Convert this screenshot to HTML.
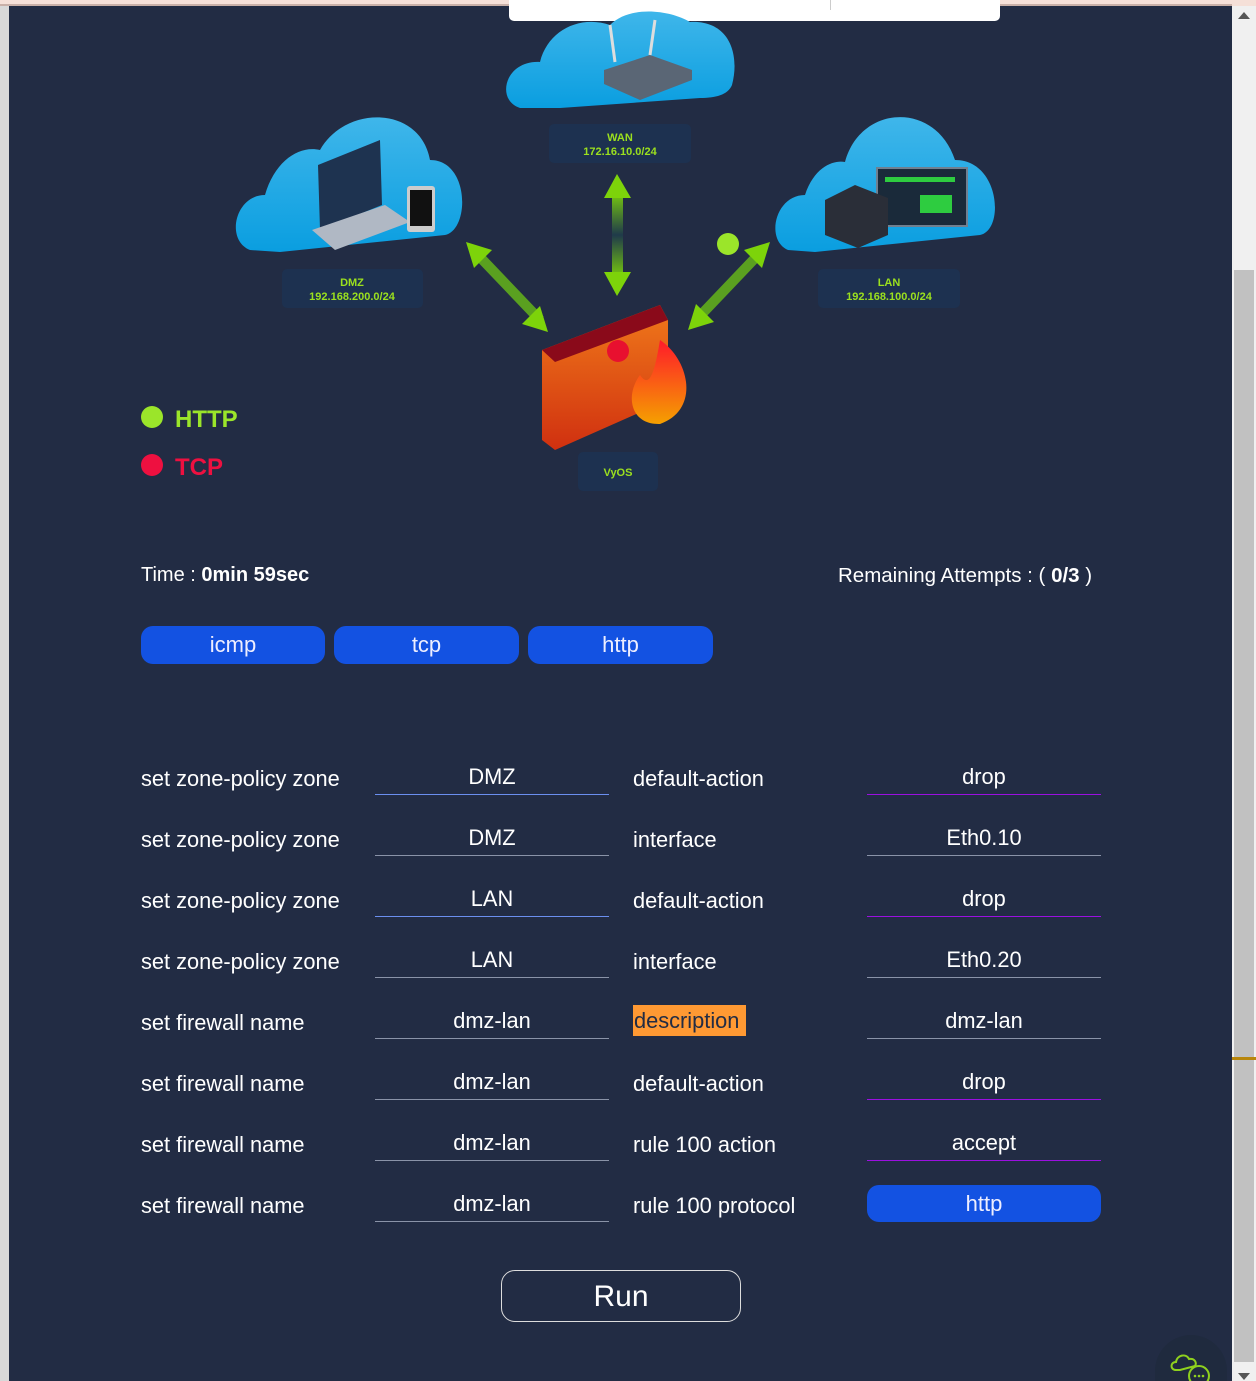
<!DOCTYPE html>
<html style="overflow:hidden;width:1256px;height:1381px"><head><meta charset="utf-8"><style>
*{margin:0;padding:0;box-sizing:border-box}
body{width:1256px;height:1381px;overflow:hidden;background:#222c44;font-family:"Liberation Sans",sans-serif;color:#fff;position:relative}
.abs{position:absolute}
.lbl{position:absolute;font-size:21.8px;color:#fff;white-space:nowrap}
.inp{position:absolute;width:234px;height:36px;text-align:center;font-size:21.8px;line-height:35px;border-bottom:1px solid #8a93a8}
.btn{position:absolute;height:38px;background:#1352e2;border-radius:12px;text-align:center;font-size:22px;line-height:38px;color:#eef}
</style></head><body>
<div class="abs" style="left:0;top:0;width:1256px;height:6px;background:#f5e0d8"></div>
<div class="abs" style="left:0;top:4px;width:1232px;height:2px;background:#c9b0a8"></div>
<div class="abs" style="left:0;top:6px;width:9px;height:1375px;background:#d8d8d8"></div>
<div class="abs" style="left:1232px;top:6px;width:24px;height:1375px;background:#f0f0f0"></div>
<div class="abs" style="left:1234px;top:270px;width:20px;height:1092px;background:#c1c1c1"></div>
<div class="abs" style="left:1232px;top:1057px;width:24px;height:3px;background:#b8860b"></div>
<div class="abs" style="left:1238px;top:12px;width:0;height:0;border-left:6px solid transparent;border-right:6px solid transparent;border-bottom:7px solid #555"></div>
<div class="abs" style="left:1238px;top:1373px;width:0;height:0;border-left:6px solid transparent;border-right:6px solid transparent;border-top:7px solid #555"></div>
<div class="abs" style="left:509px;top:0;width:491px;height:21px;background:#fff;border-radius:0 0 5px 5px"></div>
<div class="abs" style="left:830px;top:0;width:1px;height:10px;background:#ccc"></div>

<svg class="abs" style="left:0;top:0" width="1232" height="500">
<defs>
<linearGradient id="cl" x1="0" y1="0" x2="0" y2="1"><stop offset="0" stop-color="#3fb6ea"/><stop offset="1" stop-color="#0a9ee0"/></linearGradient>
<linearGradient id="ar" x1="0" y1="0" x2="0" y2="1"><stop offset="0" stop-color="#7dd30a"/><stop offset=".5" stop-color="#1f3a4a"/><stop offset="1" stop-color="#7dd30a"/></linearGradient>
<linearGradient id="br" x1="0" y1="0" x2="0" y2="1"><stop offset="0" stop-color="#f07a1a"/><stop offset="1" stop-color="#d03010"/></linearGradient>
<linearGradient id="fl" x1="0" y1="0" x2="0" y2="1"><stop offset="0" stop-color="#ff1a2a"/><stop offset="1" stop-color="#f5a000"/></linearGradient>
</defs>
<path d="M520 108 C495 100 505 60 540 62 C548 30 580 15 610 25 C630 5 670 10 690 22 C730 20 740 55 732 85 C728 95 715 98 700 98 L560 108Z" fill="url(#cl)"/>
<path d="M604 70 L650 55 L692 70 L692 80 L640 100 L604 84Z" fill="#5a6675"/>
<line x1="610" y1="25" x2="615" y2="62" stroke="#ddd" stroke-width="3"/><line x1="655" y1="20" x2="650" y2="55" stroke="#ddd" stroke-width="3"/>
<path d="M250 250 C225 240 235 195 265 195 C275 160 300 145 320 150 C345 105 420 105 430 160 C470 160 470 230 445 235 L280 252Z" fill="url(#cl)"/>
<path d="M318 165 L380 140 L382 205 L320 230Z" fill="#1e3350"/>
<path d="M312 230 L385 205 L410 222 L335 250Z" fill="#b0b8c4"/>
<rect x="407" y="186" width="28" height="46" rx="3" fill="#ccc"/><rect x="410" y="190" width="22" height="36" fill="#111"/>
<path d="M788 250 C765 240 775 195 805 195 C815 165 835 160 845 162 C860 105 935 100 955 160 C1000 160 1005 230 980 235 L815 252Z" fill="url(#cl)"/>
<rect x="877" y="168" width="90" height="58" fill="#1a2a3a" stroke="#708090" stroke-width="2"/>
<rect x="885" y="177" width="70" height="5" fill="#2ecc40"/><rect x="920" y="195" width="32" height="18" fill="#2ecc40"/>
<path d="M825 200 L855 185 L888 198 L888 235 L858 248 L825 235Z" fill="#2a2e38"/>
<rect x="549" y="124" width="142" height="39" rx="5" fill="#1d3150"/>
<rect x="282" y="269" width="141" height="39" rx="5" fill="#1d3150"/>
<rect x="818" y="269" width="142" height="39" rx="5" fill="#1d3150"/>
<rect x="578" y="452" width="80" height="39" rx="5" fill="#1d3150"/>
<g fill="#9be01e" font-family="Liberation Sans,sans-serif" font-weight="bold" font-size="11" text-anchor="middle">
<text x="620" y="141">WAN</text><text x="620" y="155">172.16.10.0/24</text>
<text x="352" y="286">DMZ</text><text x="352" y="300">192.168.200.0/24</text>
<text x="889" y="286">LAN</text><text x="889" y="300">192.168.100.0/24</text>
<text x="618" y="476">VyOS</text></g>
<rect x="612" y="190" width="11" height="90" fill="url(#ar)"/>
<path d="M604 198 L617 174 L631 198Z M604 272 L617 296 L631 272Z" fill="#7dd30a"/>
<path d="M478 255 L540 320" stroke="#5aa020" stroke-width="10"/>
<path d="M466 242 L492 250 L474 268Z M548 332 L522 324 L540 306Z" fill="#7dd30a"/>
<path d="M758 255 L698 318" stroke="#5aa020" stroke-width="10"/>
<path d="M770 242 L744 250 L762 268Z M688 330 L714 322 L696 304Z" fill="#7dd30a"/>
<circle cx="728" cy="244" r="11" fill="#9be52a"/>
<path d="M542 350 L660 305 L668 320 L668 400 L555 450 L542 440Z" fill="url(#br)"/>
<path d="M542 350 L660 305 L668 320 L555 362Z" fill="#8a0a1a"/>
<path d="M660 340 C690 360 700 410 660 424 C630 425 625 395 640 375 C650 390 655 370 660 340Z" fill="url(#fl)"/>
<circle cx="618" cy="351" r="11" fill="#e8102f"/>
<circle cx="152" cy="417" r="11" fill="#9be52a"/><circle cx="152" cy="465" r="11" fill="#ee1040"/>
<text x="175" y="427" font-family="Liberation Sans,sans-serif" font-weight="bold" font-size="24" fill="#9be52a">HTTP</text>
<text x="175" y="475" font-family="Liberation Sans,sans-serif" font-weight="bold" font-size="24" fill="#ee1040">TCP</text>
</svg>

<div class="lbl" style="left:141px;top:564px;font-size:20px">Time : <b>0min 59sec</b></div>
<div class="lbl" style="left:838px;top:564px;font-size:20.5px">Remaining Attempts : ( <b>0/3</b> )</div>
<div class="btn" style="left:141px;top:626px;width:184px">icmp</div>
<div class="btn" style="left:334px;top:626px;width:185px">tcp</div>
<div class="btn" style="left:528px;top:626px;width:185px">http</div>

<div class="lbl" style="left:141px;top:766px">set zone-policy zone</div><div class="inp" style="left:375px;top:759px;border-color:#6b8ff0">DMZ</div><div class="lbl" style="left:633px;top:766px">default-action</div><div class="inp" style="left:867px;top:759px;border-color:#9b10e0">drop</div>
<div class="lbl" style="left:141px;top:827px">set zone-policy zone</div><div class="inp" style="left:375px;top:820px">DMZ</div><div class="lbl" style="left:633px;top:827px">interface</div><div class="inp" style="left:867px;top:820px">Eth0.10</div>
<div class="lbl" style="left:141px;top:888px">set zone-policy zone</div><div class="inp" style="left:375px;top:881px;border-color:#6b8ff0">LAN</div><div class="lbl" style="left:633px;top:888px">default-action</div><div class="inp" style="left:867px;top:881px;border-color:#9b10e0">drop</div>
<div class="lbl" style="left:141px;top:949px">set zone-policy zone</div><div class="inp" style="left:375px;top:942px">LAN</div><div class="lbl" style="left:633px;top:949px">interface</div><div class="inp" style="left:867px;top:942px">Eth0.20</div>
<div class="lbl" style="left:141px;top:1010px">set firewall name</div><div class="inp" style="left:375px;top:1003px">dmz-lan</div><div class="lbl" style="left:633px;top:1005px;background:#ff9933;color:#222c44;padding:0 1px;height:31px;line-height:31px;width:113px">description</div><div class="inp" style="left:867px;top:1003px">dmz-lan</div>
<div class="lbl" style="left:141px;top:1071px">set firewall name</div><div class="inp" style="left:375px;top:1064px">dmz-lan</div><div class="lbl" style="left:633px;top:1071px">default-action</div><div class="inp" style="left:867px;top:1064px;border-color:#9b10e0">drop</div>
<div class="lbl" style="left:141px;top:1132px">set firewall name</div><div class="inp" style="left:375px;top:1125px">dmz-lan</div><div class="lbl" style="left:633px;top:1132px">rule 100 action</div><div class="inp" style="left:867px;top:1125px;border-color:#9b10e0">accept</div>
<div class="lbl" style="left:141px;top:1193px">set firewall name</div><div class="inp" style="left:375px;top:1186px">dmz-lan</div><div class="lbl" style="left:633px;top:1193px">rule 100 protocol</div><div class="btn" style="left:867px;top:1185px;width:234px;height:37px;line-height:37px">http</div>

<div class="abs" style="left:501px;top:1270px;width:240px;height:52px;border:1px solid #ddd;border-radius:14px;text-align:center;font-size:30px;line-height:52px">Run</div>
<div class="abs" style="left:1155px;top:1335px;width:72px;height:46px;border-radius:36px 36px 0 0;background:#1f2a3e"></div>
<svg class="abs" style="left:1170px;top:1352px" width="42" height="29"><path d="M6 18 C0 18 0 10 6 10 C7 3 16 1 19 7 C25 6 27 11 25 14 L10 18Z" fill="none" stroke="#8fd11e" stroke-width="2"/><circle cx="29" cy="24" r="10" fill="#1f2a3e" stroke="#8fd11e" stroke-width="2"/><circle cx="25" cy="24" r="1.3" fill="#8fd11e"/><circle cx="29" cy="24" r="1.3" fill="#8fd11e"/><circle cx="33" cy="24" r="1.3" fill="#8fd11e"/></svg>
</body></html>
